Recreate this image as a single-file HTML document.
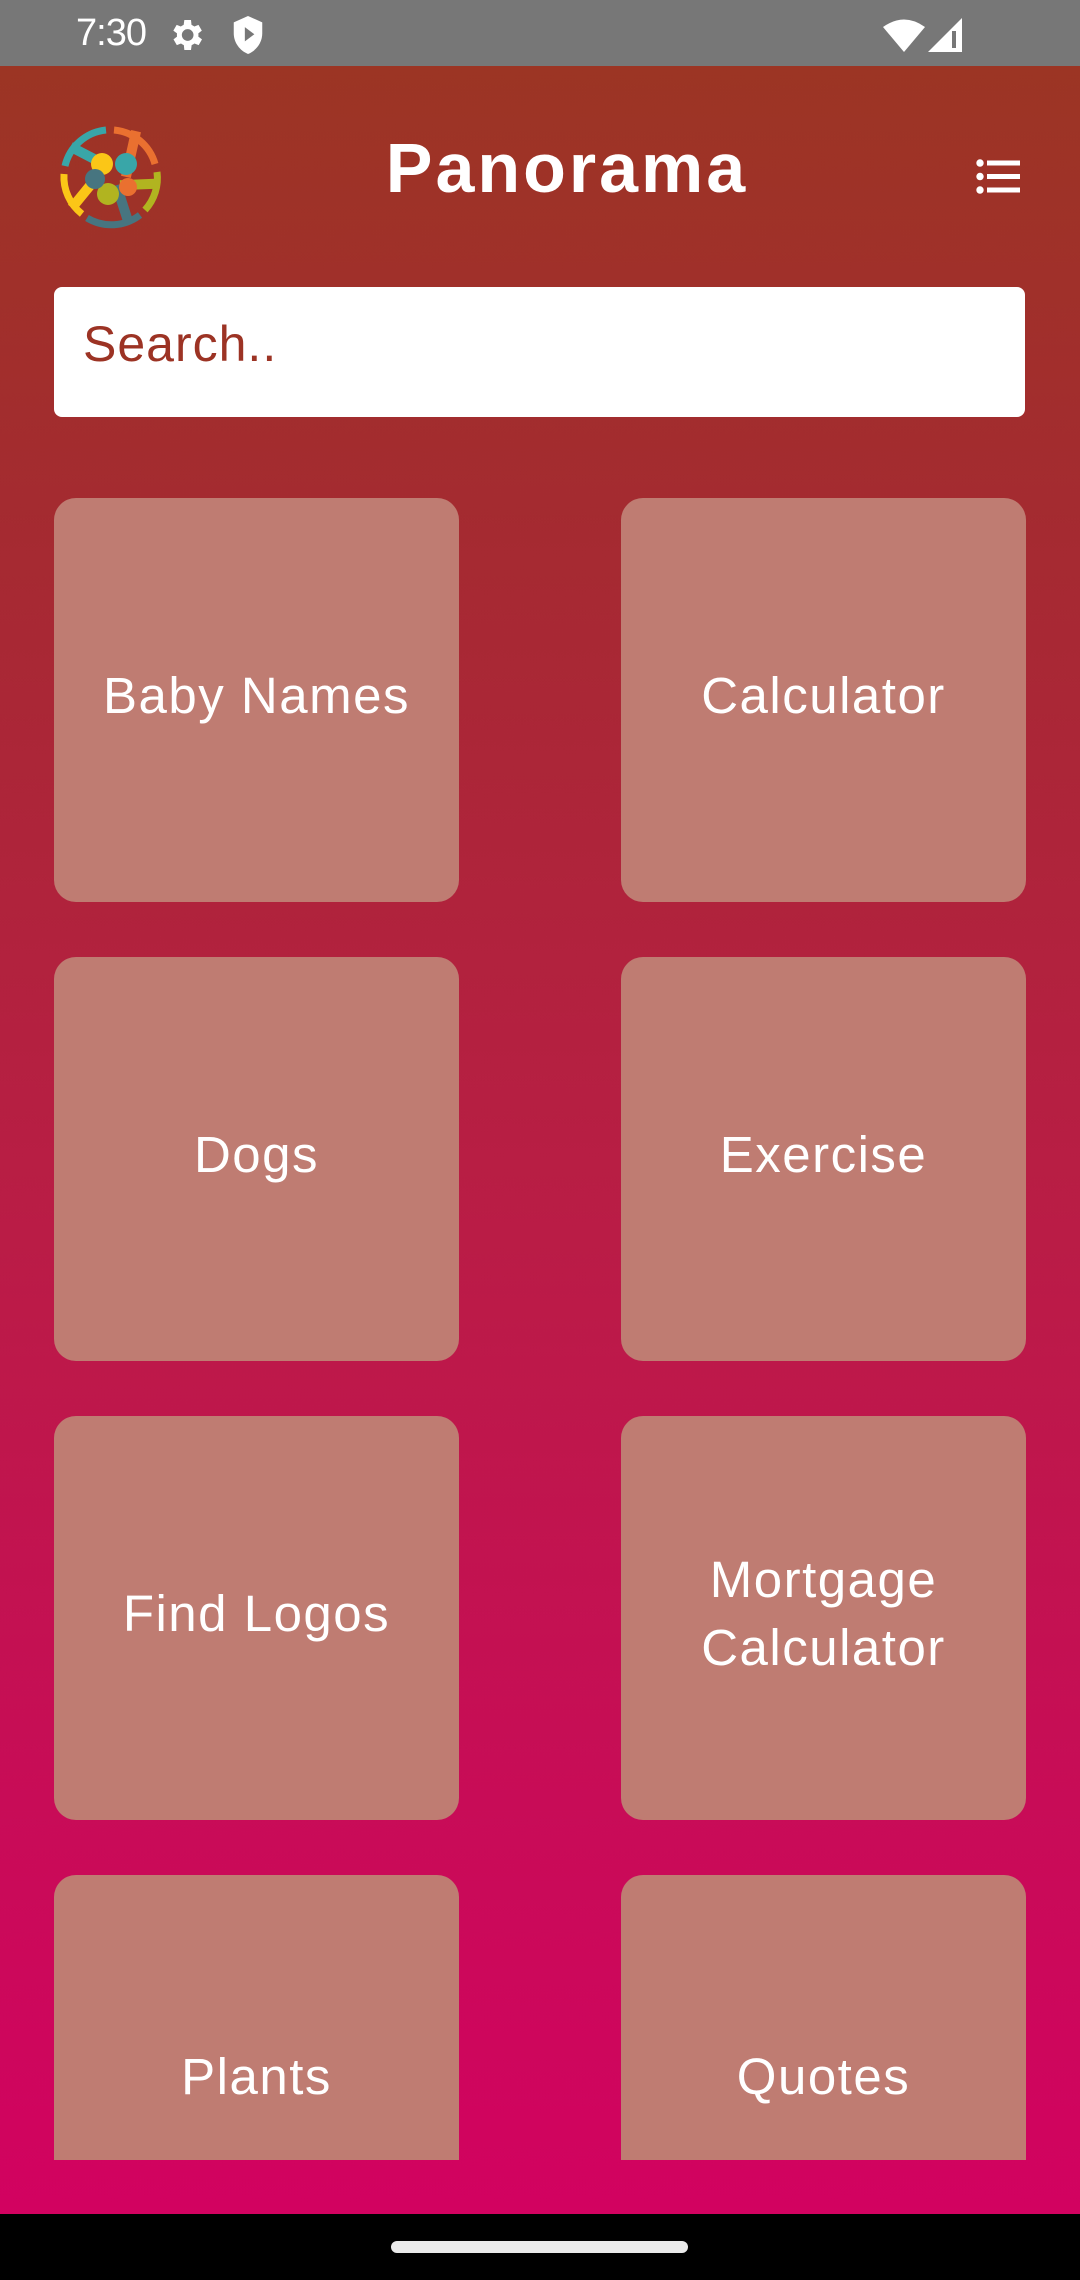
<!DOCTYPE html>
<html><head><meta charset="utf-8">
<style>
*{margin:0;padding:0;box-sizing:border-box}
html,body{width:1080px;height:2280px;overflow:hidden}
body{position:relative;font-family:"Liberation Sans",sans-serif;background:linear-gradient(180deg,#9c3524 66px,#a42b30 500px,#b91d45 1200px,#c80c57 1800px,#d20260 2214px)}
.status{position:absolute;left:0;top:0;width:1080px;height:66px;background:#777}
.time{position:absolute;left:76px;top:12px;color:#fff;font-size:38px;letter-spacing:-1px}
.title{position:absolute;left:0;width:1134px;text-align:center;top:128px;color:#fff;font-weight:bold;font-size:70px;line-height:80px;letter-spacing:3px}
.search{position:absolute;left:54px;top:287px;width:971px;height:130px;background:#fff;border-radius:8px}
.search span{position:absolute;left:29px;top:28px;font-size:50px;color:#9c3324;letter-spacing:1px}
.tile{position:absolute;width:405px;background:#bf7c72;border-radius:22px;display:flex;align-items:center;justify-content:center;text-align:center;color:#fff;font-size:51px;line-height:68px;letter-spacing:1.5px;padding-bottom:8px}
.c1{left:54px}.c2{left:621px}
.nav{position:absolute;left:0;top:2214px;width:1080px;height:66px;background:#000}
.pill{position:absolute;left:391px;top:2241px;width:297px;height:12px;border-radius:6px;background:#eaeaea}
</style></head><body>
<div class="status">
<div class="time">7:30</div>
<svg style="position:absolute;left:166px;top:15px" width="40" height="40" viewBox="0 0 24 24"><path fill="#fff" d="M19.4 13a7.5 7.5 0 0 0 0-2l2.1-1.6-2-3.5-2.5 1a7 7 0 0 0-1.7-1L15 3h-4l-.4 2.9a7 7 0 0 0-1.7 1l-2.5-1-2 3.5L6.6 11a7.5 7.5 0 0 0 0 2l-2.1 1.6 2 3.5 2.5-1a7 7 0 0 0 1.7 1L11 21h4l.4-2.9a7 7 0 0 0 1.7-1l2.5 1 2-3.5zM13 15.5a3.5 3.5 0 1 1 0-7 3.5 3.5 0 0 1 0 7z"/></svg>
<svg style="position:absolute;left:229px;top:14px" width="38" height="42" viewBox="0 0 24 26"><path fill="#fff" d="M12 1 3 5v7c0 6 4 11 9 13 5-2 9-7 9-13V5z"/><path fill="#777" d="M10 8v9l6-4.5z"/></svg>
<svg style="position:absolute;left:883px;top:18px" width="42" height="34" viewBox="0 0 42 34"><path fill="#fff" d="M0 9Q21-6 42 9L21 34z"/></svg>
<svg style="position:absolute;left:928px;top:18px" width="34" height="34" viewBox="0 0 34 34"><path fill="#fff" d="M34 0V34H0z"/><path fill="#777" d="M24 13h4v17h-4z"/></svg>
</div>

<svg style="position:absolute;left:55px;top:122px" width="110" height="110" viewBox="0 0 110 110">
<g fill="none" stroke-width="7">
<path stroke="#39a6a8" d="M10 44A47 47 0 0 1 51 8"/>
<path stroke="#ea7030" d="M59 8A47 47 0 0 1 100 42"/>
<path stroke="#b1b420" d="M102 50A47 47 0 0 1 90 88"/>
<path stroke="#477580" d="M85 93A47 47 0 0 1 32 96"/>
<path stroke="#fbc617" d="M27 92A47 47 0 0 1 9 52"/>
</g>
<g stroke-width="10" stroke-linecap="square">
<path stroke="#39a6a8" d="M20 27L45 40"/>
<path stroke="#ea7030" d="M80 14L72 50"/>
<path stroke="#b1b420" d="M95 62L70 63"/>
<path stroke="#477580" d="M72 96L63 68"/>
<path stroke="#fbc617" d="M20 82L38 60"/>
</g>
<circle cx="47" cy="42" r="11" fill="#fbc617"/>
<circle cx="71" cy="42" r="11" fill="#39a6a8"/>
<circle cx="73" cy="65" r="9" fill="#ea7030"/>
<circle cx="53" cy="72" r="11" fill="#b1b420"/>
<circle cx="40" cy="57" r="10" fill="#477580"/>
</svg>
<div class="title">Panorama</div>
<svg style="position:absolute;left:975px;top:158px" width="46" height="38" viewBox="0 0 46 38">
<g fill="#fff"><circle cx="5" cy="5" r="3.7"/><circle cx="5" cy="18.5" r="3.7"/><circle cx="5" cy="32" r="3.7"/>
<rect x="12" y="2.5" width="33" height="5"/><rect x="12" y="16" width="33" height="5"/><rect x="12" y="29.5" width="33" height="5"/></g></svg>

<div class="search"><span>Search..</span></div>

<div class="tile c1" style="top:498px;height:404px">Baby Names</div>
<div class="tile c2" style="top:498px;height:404px">Calculator</div>
<div class="tile c1" style="top:957px;height:404px">Dogs</div>
<div class="tile c2" style="top:957px;height:404px">Exercise</div>
<div class="tile c1" style="top:1416px;height:404px">Find Logos</div>
<div class="tile c2" style="top:1416px;height:404px">Mortgage<br>Calculator</div>
<div class="tile c1" style="top:1875px;height:285px;border-radius:22px 22px 0 0;padding-top:118px;padding-bottom:0">Plants</div>
<div class="tile c2" style="top:1875px;height:285px;border-radius:22px 22px 0 0;padding-top:118px;padding-bottom:0">Quotes</div>

<div class="nav"></div><div class="pill"></div>
</body></html>
